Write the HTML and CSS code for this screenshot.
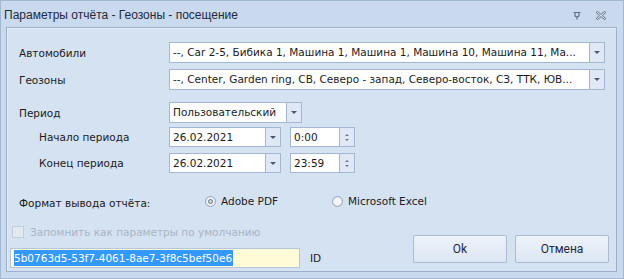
FILE: index.html
```html
<!DOCTYPE html>
<html lang="ru">
<head>
  <meta charset="UTF-8">
  <title>Параметры отчёта</title>
  <link rel="stylesheet" href="styles.css">
</head>
<body>
  <div class="window">
    <div class="titlebar">
      <span class="title">Параметры отчёта - Геозоны - посещение</span>
      <svg class="tb-icon" width="8" height="9" viewBox="0 0 8 9">
        <path d="M0.5 1.5h7M2 1.5v3c0 .8.8 1.3 2 1.3s2-.5 2-1.3v-3M4 5.8v2.7" fill="none" stroke="#5f7089" stroke-width="1.2"/>
      </svg>
      <svg class="tb-icon close" width="10" height="9" viewBox="0 0 10 9">
        <path d="M1.5 1.5l7 6M8.5 1.5l-7 6" stroke="#75849b" stroke-width="2.8" stroke-linecap="round"/>
        <path d="M1.5 1.5l7 6M8.5 1.5l-7 6" stroke="#eef3fa" stroke-width="1" stroke-linecap="round"/>
      </svg>
    </div>
    <div class="panel">
      <div class="row">
        <label class="lbl">Автомобили</label>
        <div class="combo wide">
          <span class="val">--, Car 2-5, Бибика 1, Машина 1, Машина 1, Машина 10, Машина 11, Ма...</span>
          <span class="btn"><i class="arrow"></i></span>
        </div>
      </div>
      <div class="row r2">
        <label class="lbl">Геозоны</label>
        <div class="combo wide">
          <span class="val">--, Center, Garden ring, СВ, Северо - запад, Северо-восток, СЗ, ТТК, ЮВ...</span>
          <span class="btn"><i class="arrow"></i></span>
        </div>
      </div>
      <div class="row r3">
        <label class="lbl">Период</label>
        <div class="combo period">
          <span class="val">Пользовательский</span>
          <span class="btn"><i class="arrow"></i></span>
        </div>
      </div>
      <div class="row r4 sub">
        <label class="lbl">Начало периода</label>
        <div class="combo date">
          <span class="val">26.02.2021</span>
          <span class="btn"><i class="arrow"></i></span>
        </div>
        <div class="combo time">
          <span class="val">0:00</span>
          <span class="spin"><i class="up"></i><i class="down"></i></span>
        </div>
      </div>
      <div class="row r5 sub">
        <label class="lbl">Конец периода</label>
        <div class="combo date">
          <span class="val">26.02.2021</span>
          <span class="btn"><i class="arrow"></i></span>
        </div>
        <div class="combo time">
          <span class="val">23:59</span>
          <span class="spin"><i class="up"></i><i class="down"></i></span>
        </div>
      </div>
      <div class="format">
        <span class="format-lbl">Формат вывода отчёта:</span>
        <label class="radio on"><i class="dot"></i>Adobe PDF</label>
        <label class="radio"><i class="dot"></i>Microsoft Excel</label>
      </div>
      <div class="footer">
        <div class="footer-left">
          <label class="check"><i class="box"></i>Запомнить как параметры по умолчанию</label>
          <div class="id-row">
            <div class="id-box"><span class="sel">5b0763d5-53f7-4061-8ae7-3f8c5bef50e6</span></div>
            <span class="id-lbl">ID</span>
          </div>
        </div>
        <div class="buttons">
          <button class="button">Ok</button>
          <button class="button">Отмена</button>
        </div>
      </div>
    </div>
  </div>
</body>
</html>
```

FILE: styles.css
```css
body {
  margin: 0;
  font-family: "DejaVu Sans", sans-serif;
  font-size: 10.5px;
  color: #1b1b1b;
}
.window {
  width: 624px;
  height: 279px;
  box-sizing: border-box;
  background: #c9d9ee;
  border: 1px solid #a3b6d2;
  padding: 0 6px 6px 5px;
  display: flex;
  flex-direction: column;
}
.titlebar {
  height: 26px;
  display: flex;
  align-items: center;
}
.title {
  font-family: "Liberation Sans", sans-serif;
  font-size: 12px;
  color: #1f2a3c;
  margin-left: -2px;
  margin-top: 2px;
  flex: 1;
}
.tb-icon {
  margin-right: 15px;
  margin-top: 2px;
}
.tb-icon.close {
  margin-right: 11px;
}
.panel {
  flex: 1;
  background: #d5e2f2;
  border: 1px solid #9cb0cd;
  box-shadow: inset 1px 1px 0 #e6eef9;
  padding: 14px 11px 0 12px;
  display: flex;
  flex-direction: column;
}
.row {
  display: flex;
  align-items: center;
  height: 21px;
}
.r2 { margin-top: 6px; }
.r3 { margin-top: 12px; }
.r4 { margin-top: 4px; height: 20px; }
.r5 { margin-top: 6px; height: 20px; }
.lbl {
  width: 150px;
  flex: none;
}
.sub .lbl {
  width: 130px;
  padding-left: 20px;
}
.combo {
  display: flex;
  height: 100%;
  box-sizing: border-box;
  border: 1px solid #a4b7d2;
  background: #fff;
}
.combo .val {
  flex: 1;
  padding-left: 3px;
  white-space: nowrap;
  overflow: hidden;
  line-height: 19px;
}
.combo .btn,
.combo .spin {
  width: 14px;
  flex: none;
  border-left: 1px solid #a4b7d2;
  background: #dfe8f4;
  display: flex;
  align-items: center;
  justify-content: center;
}
.combo .spin {
  flex-direction: column;
  gap: 3px;
}
.arrow {
  width: 0;
  height: 0;
  border-left: 3px solid transparent;
  border-right: 3px solid transparent;
  border-top: 3px solid #4a5a72;
}
.up {
  width: 0;
  height: 0;
  border-left: 2px solid transparent;
  border-right: 2px solid transparent;
  border-bottom: 2px solid #6a7a92;
}
.down {
  width: 0;
  height: 0;
  border-left: 2px solid transparent;
  border-right: 2px solid transparent;
  border-top: 2px solid #6a7a92;
}
.wide { width: 436px; }
.period { width: 133px; }
.date { width: 112px; }
.time { width: 65px; margin-left: 9px; }
.format {
  display: flex;
  align-items: center;
  margin-top: 19px;
  height: 18px;
}
.format-lbl {
  width: 186px;
  padding-top: 3px;
}
.radio {
  display: flex;
  align-items: center;
  gap: 5px;
  width: 127px;
}
.radio .dot {
  width: 11px;
  height: 11px;
  box-sizing: border-box;
  border-radius: 50%;
  border: 1px solid #9aa5b4;
  background: radial-gradient(circle, #f4f6f9 40%, #d8dde5 100%);
  display: flex;
  align-items: center;
  justify-content: center;
}
.radio.on .dot::after {
  content: "";
  width: 5px;
  height: 5px;
  box-sizing: border-box;
  border-radius: 50%;
  border: 1px solid #6b778a;
  background: #c9d0da;
}
.footer {
  display: flex;
  justify-content: space-between;
  margin-top: 15px;
  margin-left: -9px;
  margin-right: -4px;
}
.footer-left {
  display: flex;
  flex-direction: column;
}
.check {
  display: flex;
  align-items: center;
  gap: 6px;
  color: #a9b4c4;
  height: 14px;
  padding-left: 2px;
}
.check .box {
  width: 10px;
  height: 10px;
  border: 1px solid #c3ccd8;
  background: #e3e8ef;
}
.id-row {
  display: flex;
  align-items: center;
  margin-top: 9px;
  gap: 10px;
}
.id-box {
  width: 290px;
  height: 20px;
  box-sizing: border-box;
  border: 1px solid #b6c5da;
  background: #fffbd6;
  padding: 1px 3px;
}
.sel {
  display: inline-block;
  background: #3399ff;
  color: #fff;
  line-height: 16px;
  padding-right: 1px;
}
.buttons {
  display: flex;
  gap: 8px;
  margin-top: 10px;
  align-items: flex-start;
}
.button {
  width: 94px;
  height: 28px;
  font-family: Roboto, "Liberation Sans", sans-serif;
  font-size: 12px;
  color: #1f2a3c;
  border: 1px solid #a9bbd5;
  border-radius: 2px;
  background: linear-gradient(#eef3fa, #dce6f3);
}
```
